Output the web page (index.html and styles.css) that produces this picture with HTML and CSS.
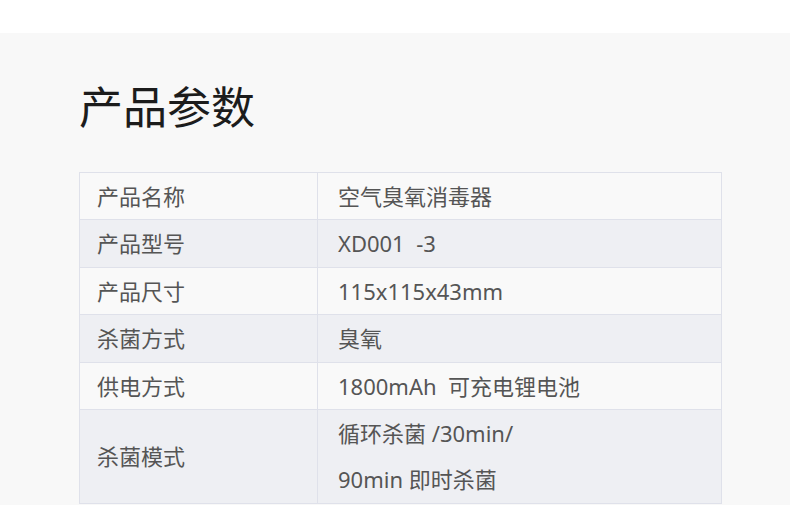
FILE: index.html
```html
<!DOCTYPE html>
<html lang="zh">
<head>
<meta charset="utf-8">
<link rel="stylesheet" href="styles.css">
</head>
<body>
<div class="top"></div>
<section class="params">
  <h1 class="title">产品参数</h1>
  <table class="spec">
    <colgroup><col class="c1"><col class="c2"></colgroup>
    <tr><td class="k">产品名称</td><td class="v">空气臭氧消毒器</td></tr>
    <tr><td class="k">产品型号</td><td class="v">XD001&nbsp; -3</td></tr>
    <tr><td class="k">产品尺寸</td><td class="v">115x115x43mm</td></tr>
    <tr><td class="k">杀菌方式</td><td class="v">臭氧</td></tr>
    <tr><td class="k">供电方式</td><td class="v">1800mAh&nbsp; 可充电锂电池</td></tr>
    <tr><td class="k">杀菌模式</td><td class="v">循环杀菌 /30min/<br>90min 即时杀菌</td></tr>
  </table>
</section>
</body>
</html>
```
FILE: styles.css
```css
html, body {
  margin: 0;
  padding: 0;
  background: #f8f8f8;
  font-family: "Noto Sans", "Noto Sans CJK SC", sans-serif;
}
.top {
  height: 33px;
  background: #ffffff;
}
.params {
  padding: 27px 68px 0 79px;
  height: 445px;
  overflow: hidden;
}
.title {
  margin: 0 0 17px 0;
  font-size: 44px;
  font-weight: 400;
  line-height: 95px;
  height: 95px;
  color: #1c1c1c;
}
.spec {
  width: 643px;
  border-collapse: collapse;
  border: 1px solid #dcdfea;
  font-size: 22px;
  color: #555555;
}
.spec .c1 { width: 238px; }
.spec td {
  border: 1px solid #dfe1ea;
  line-height: 46.4px;
  padding: 0;
  vertical-align: middle;
}
.spec tr:nth-child(odd) td { background: #f9f9f9; }
.spec tr:nth-child(even) td { background: #eeeff3; }
.spec td.k { padding-left: 17px; }
.spec td.v { padding-left: 20px; }
```
